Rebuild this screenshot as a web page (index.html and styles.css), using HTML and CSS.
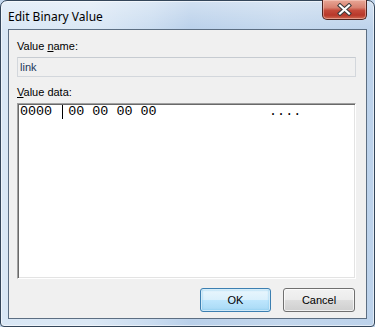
FILE: index.html
```html
<!DOCTYPE html>
<html lang="en">
<head>
    <meta charset="UTF-8">
    <meta name="viewport" content="width=device-width, initial-scale=1.0">
    <title>Edit Binary Value</title>
    <link rel="stylesheet" href="styles.css">
</head>
<body>
    <div class="window">
        <div class="titlebar">
            <span class="title">Edit Binary Value</span>
            <button class="btn-close" title="Close">
                <svg width="15" height="13" viewBox="0 0 15 13">
                    <path d="M3 2.5 L12 10.5 M12 2.5 L3 10.5" stroke="#3b3b3b" stroke-width="4.2" stroke-linecap="square"/>
                    <path d="M3 2.5 L12 10.5 M12 2.5 L3 10.5" stroke="#fff" stroke-width="2.2" stroke-linecap="square"/>
                </svg>
            </button>
        </div>
        <form class="client" id="binaryForm">
            <label class="field-label" for="valueName">Value <u>n</u>ame:</label>
            <input class="name-field" type="text" id="valueName" value="link" readonly>
            <label class="field-label label-data" for="valueData"><u>V</u>alue data:</label>
            <div class="data-box" id="valueData">
                <div class="data-row">0000 <span class="caret"></span>00 00 00 00              ....</div>
            </div>
            <div class="buttons">
                <button type="submit" class="btn btn-ok">OK</button>
                <button type="button" class="btn">Cancel</button>
            </div>
        </form>
    </div>
</body>
</html>
```

FILE: styles.css
```css
body {
    margin: 0;
    padding: 0;
    font-family: "Liberation Sans", Arial, sans-serif;
    background-color: #c4d8ee;
}
.window {
    width: 375px;
    height: 327px;
    box-sizing: border-box;
    display: flex;
    flex-direction: column;
    padding: 0 7px 7px 7px;
    border: 1px solid #34465a;
    border-radius: 7px 7px 4px 4px;
    box-shadow: inset 0 0 0 1px rgba(255, 255, 255, 0.55);
    background:
        linear-gradient(180deg, rgba(255, 255, 255, 0.35) 0, rgba(255, 255, 255, 0) 30px),
        linear-gradient(90deg, #d9e7f5 0, #dbe8f5 90px, #cadcf0 150px, #b9d0ea 190px, #c3d7ed 280px, #bcd2eb 375px);
}
.titlebar {
    height: 29px;
    display: flex;
    align-items: flex-start;
}
.title {
    font-family: "Noto Sans", "Open Sans", sans-serif;
    font-size: 12px;
    color: #000;
    margin-top: 7px;
    flex: 1;
}
.btn-close {
    width: 45px;
    height: 20px;
    margin-top: -1px;
    padding: 0;
    border: 1px solid #4e2420;
    border-top: none;
    border-radius: 0 0 5px 5px;
    background: linear-gradient(180deg, #e8a796 0, #d88170 40%, #c44a3a 55%, #b8382a 80%, #cf6a52 100%);
    box-shadow: inset 0 0 0 1px rgba(255, 220, 210, 0.45);
    display: flex;
    align-items: center;
    justify-content: center;
}
.client {
    flex: 1;
    margin: 0;
    background-color: #f0f0f0;
    border: 1px solid #5c6e82;
    padding: 10px 10px 6px 8px;
    display: flex;
    flex-direction: column;
    font-size: 11px;
}
.field-label {
    display: block;
    line-height: 13px;
    color: #000;
}
.name-field {
    margin: 4px 0 9px 0;
    height: 20px;
    box-sizing: border-box;
    border: 1px solid #d3d7dc;
    border-top-color: #c6cbd1;
    background-color: #f0f0f0;
    color: #22375a;
    font-family: "Liberation Sans", Arial, sans-serif;
    font-size: 11px;
    padding: 0 2px;
}
.data-box {
    margin-top: 4px;
    height: 176px;
    box-sizing: border-box;
    background-color: #fff;
    border-top: 1px solid #a0a0a0;
    border-left: 1px solid #a0a0a0;
    border-right: 1px solid #fff;
    border-bottom: 1px solid #fff;
    box-shadow: inset 1px 1px 0 #696969, inset -1px -1px 0 #e3e3e3, 0 0 0 0 transparent;
    padding: 1px 0 0 2px;
}
.data-row {
    font-family: "Liberation Mono", "Courier New", monospace;
    font-size: 13.4px;
    line-height: 14px;
    white-space: pre;
    color: #000;
}
.caret {
    display: inline-block;
    width: 2px;
    height: 14px;
    border-right: 1px solid #000;
    margin-right: 5px;
    vertical-align: top;
}
.buttons {
    display: flex;
    justify-content: flex-end;
    gap: 12px;
    margin-top: 9px;
    margin-right: 1px;
}
.btn {
    width: 72px;
    height: 24px;
    padding: 0;
    border: 1px solid #707070;
    border-radius: 3px;
    background: linear-gradient(180deg, #f2f2f2 0, #ebebeb 50%, #dddddd 50%, #cfcfcf 100%);
    box-shadow: inset 0 0 0 1px rgba(255, 255, 255, 0.7);
    font-family: "Liberation Sans", Arial, sans-serif;
    font-size: 11px;
    color: #000;
}
.btn-ok {
    width: 71px;
    border-color: #3c7fb1;
    background: linear-gradient(180deg, #eaf6fd 0, #d9f0fc 50%, #bee6fd 50%, #a7d9f5 100%);
    box-shadow: inset 0 0 0 1px rgba(255, 255, 255, 0.6), inset 0 0 2px 1px #7ec4ea;
}
```
